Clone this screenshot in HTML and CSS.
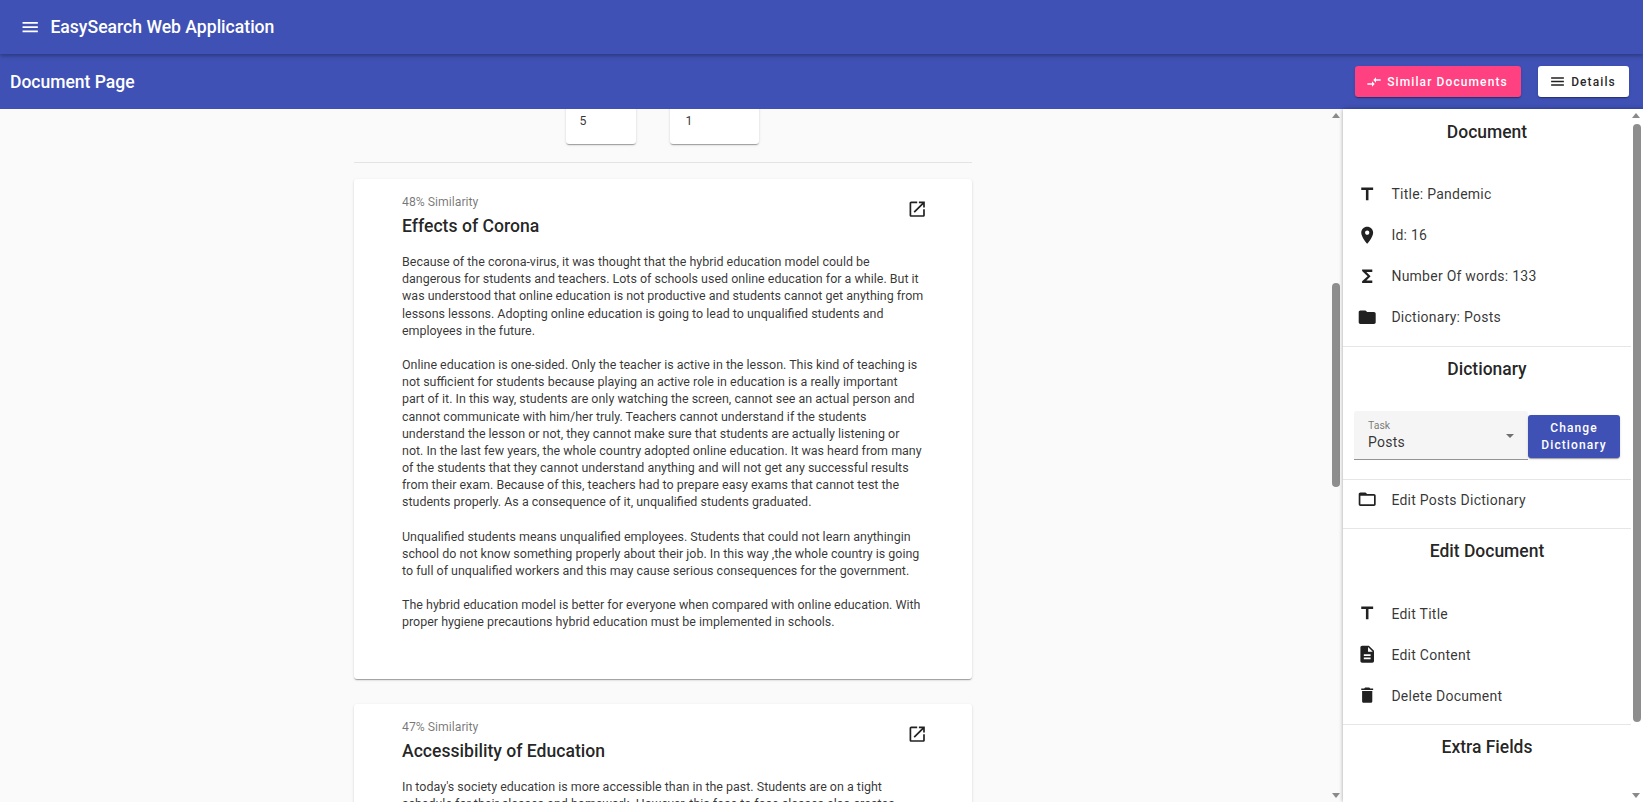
FILE: index.html
```html
<!DOCTYPE html>
<html lang="en">
<head>
    <meta charset="UTF-8">
    <title>EasySearch Web Application</title>
    <link rel="stylesheet" href="styles.css">
</head>
<body>

<header class="toolbar toolbar-top">
    <svg class="icon menu-icon" viewBox="0 0 24 24"><path d="M3 18h18v-2H3v2zm0-5h18v-2H3v2zm0-7v2h18V6H3z"/></svg>
    <span class="app-title">EasySearch Web Application</span>
</header>

<div class="toolbar toolbar-page">
    <span class="page-title">Document Page</span>
    <div class="toolbar-actions">
        <button class="btn btn-pink">
            <svg class="icon" viewBox="0 0 24 24"><path d="M9.01 14H2v2h7.01v3L13 15l-3.99-4v3zm5.98-1v-3H22V8h-7.01V5L11 9l3.99 4z"/></svg>
            Similar Documents
        </button>
        <button class="btn btn-white">
            <svg class="icon" viewBox="0 0 24 24"><path d="M3 18h18v-2H3v2zm0-5h18v-2H3v2zm0-7v2h18V6H3z"/></svg>
            Details
        </button>
    </div>
</div>

<div class="content">
    <main class="main">
        <div class="main-inner">
            <div class="stats">
                <div class="stat stat-small">5</div>
                <div class="stat stat-large">1</div>
            </div>
            <hr class="main-rule">

            <article class="card">
                <svg class="icon card-open" viewBox="0 0 24 24"><path d="M19 19H5V5h7V3H5c-1.11 0-2 .9-2 2v14c0 1.1.89 2 2 2h14c1.1 0 2-.9 2-2v-7h-2v7zM14 3v2h3.59l-9.83 9.83 1.41 1.41L19 6.41V10h2V3h-7z"/></svg>
                <div class="card-sub">48% Similarity</div>
                <h2 class="card-title">Effects of Corona</h2>
                <p>Because of the corona-virus, it was thought that the hybrid education model could be<br>
                dangerous for students and teachers. Lots of schools used online education for a while. But it<br>
                was understood that online education is not productive and students cannot get anything from<br>
                lessons lessons. Adopting online education is going to lead to unqualified students and<br>
                employees in the future.</p>
                <p>Online education is one-sided. Only the teacher is active in the lesson. This kind of teaching is<br>
                not sufficient for students because playing an active role in education is a really important<br>
                part of it. In this way, students are only watching the screen, cannot see an actual person and<br>
                cannot communicate with him/her truly. Teachers cannot understand if the students<br>
                understand the lesson or not, they cannot make sure that students are actually listening or<br>
                not. In the last few years, the whole country adopted online education. It was heard from many<br>
                of the students that they cannot understand anything and will not get any successful results<br>
                from their exam. Because of this, teachers had to prepare easy exams that cannot test the<br>
                students properly. As a consequence of it, unqualified students graduated.</p>
                <p>Unqualified students means unqualified employees. Students that could not learn anythingin<br>
                school do not know something properly about their job. In this way ,the whole country is going<br>
                to full of unqualified workers and this may cause serious consequences for the government.</p>
                <p>The hybrid education model is better for everyone when compared with online education. With<br>
                proper hygiene precautions hybrid education must be implemented in schools.</p>
            </article>

            <article class="card">
                <svg class="icon card-open" viewBox="0 0 24 24"><path d="M19 19H5V5h7V3H5c-1.11 0-2 .9-2 2v14c0 1.1.89 2 2 2h14c1.1 0 2-.9 2-2v-7h-2v7zM14 3v2h3.59l-9.83 9.83 1.41 1.41L19 6.41V10h2V3h-7z"/></svg>
                <div class="card-sub">47% Similarity</div>
                <h2 class="card-title">Accessibility of Education</h2>
                <p>In today's society education is more accessible than in the past. Students are on a tight<br>
                schedule for their classes and homework. However, this face to face classes also creates</p>
            </article>
        </div>

        <div class="scroll-up"></div>
        <div class="scroll-thumb main-thumb"></div>
        <div class="scroll-down"></div>
    </main>

    <aside class="side">
        <div class="side-inner">
            <section class="side-section first">
                <h3 class="side-heading">Document</h3>
                <div class="side-row">
                    <svg class="icon" viewBox="0 0 24 24"><path d="M5 4v3h5.5v12h3V7H19V4z"/></svg>
                    <span>Title: Pandemic</span>
                </div>
                <div class="side-row">
                    <svg class="icon" viewBox="0 0 24 24"><path d="M12 2C8.13 2 5 5.13 5 9c0 5.25 7 13 7 13s7-7.75 7-13c0-3.87-3.13-7-7-7zm0 9.5c-1.38 0-2.5-1.12-2.5-2.5s1.12-2.5 2.5-2.5 2.5 1.12 2.5 2.5-1.12 2.5-2.5 2.5z"/></svg>
                    <span>Id: 16</span>
                </div>
                <div class="side-row">
                    <svg class="icon" viewBox="0 0 24 24"><path d="M18 4H6v2l6.5 6L6 18v2h12v-3h-7l5-5-5-5h7z"/></svg>
                    <span>Number Of words: 133</span>
                </div>
                <div class="side-row">
                    <svg class="icon" viewBox="0 0 24 24"><path d="M10 4H4c-1.1 0-1.99.9-1.99 2L2 18c0 1.1.9 2 2 2h16c1.1 0 2-.9 2-2V8c0-1.1-.9-2-2-2h-8l-2-2z"/></svg>
                    <span>Dictionary: Posts</span>
                </div>
            </section>

            <section class="side-section dict-section">
                <h3 class="side-heading">Dictionary</h3>
                <div class="dict-form">
                    <div class="select-field">
                        <div class="select-text">
                            <div class="select-label">Task</div>
                            <div class="select-value">Posts</div>
                        </div>
                        <div class="select-arrow"></div>
                    </div>
                    <button class="btn btn-blue">Change Dictionary</button>
                </div>
            </section>

            <section class="side-section edit-link">
                <div class="side-row">
                    <svg class="icon" viewBox="0 0 24 24"><path d="M20 6h-8l-2-2H4c-1.1 0-1.99.9-1.99 2L2 18c0 1.1.9 2 2 2h16c1.1 0 2-.9 2-2V8c0-1.1-.9-2-2-2zm0 12H4V8h16v10z"/></svg>
                    <span>Edit Posts Dictionary</span>
                </div>
            </section>

            <section class="side-section edit-section">
                <h3 class="side-heading">Edit Document</h3>
                <div class="side-row">
                    <svg class="icon" viewBox="0 0 24 24"><path d="M5 4v3h5.5v12h3V7H19V4z"/></svg>
                    <span>Edit Title</span>
                </div>
                <div class="side-row">
                    <svg class="icon" viewBox="0 0 24 24"><path d="M14 2H6c-1.1 0-1.99.9-1.99 2L4 20c0 1.1.89 2 1.99 2H18c1.1 0 2-.9 2-2V8l-6-6zm2 16H8v-2h8v2zm0-4H8v-2h8v2zm-3-5V3.5L18.5 9H13z"/></svg>
                    <span>Edit Content</span>
                </div>
                <div class="side-row">
                    <svg class="icon" viewBox="0 0 24 24"><path d="M6 19c0 1.1.9 2 2 2h8c1.1 0 2-.9 2-2V7H6v12zM19 4h-3.5l-1-1h-5l-1 1H5v2h14V4z"/></svg>
                    <span>Delete Document</span>
                </div>
            </section>

            <section class="side-section last">
                <h3 class="side-heading">Extra Fields</h3>
            </section>
        </div>

        <div class="scroll-up"></div>
        <div class="scroll-thumb side-thumb"></div>
        <div class="scroll-down"></div>
    </aside>
</div>

</body>
</html>
```

FILE: styles.css
```css
* {
    box-sizing: border-box;
}
body {
    margin: 0;
    height: 100vh;
    display: flex;
    flex-direction: column;
    overflow: hidden;
    background: #fafafa;
    font-family: Roboto, sans-serif;
    color: rgba(0, 0, 0, 0.87);
}
.icon {
    width: 20.4px;
    height: 20.4px;
    fill: currentColor;
    flex: none;
}

/* toolbars */
.toolbar {
    display: flex;
    align-items: center;
    flex: none;
    background: #3f51b5;
    color: white;
    font-weight: 500;
}
.toolbar-top {
    position: relative;
    z-index: 2;
    height: 54px;
    padding-left: 20px;
    gap: 10px;
    box-shadow: 0 2px 4px rgba(0, 0, 0, 0.3);
}
.app-title {
    font-size: 17.6px;
}
.toolbar-page {
    height: 55px;
    padding: 0 14px 0 10px;
    justify-content: space-between;
}
.page-title {
    font-size: 17.5px;
}
.toolbar-actions {
    display: flex;
    gap: 17px;
}

/* buttons */
.btn {
    display: flex;
    align-items: center;
    justify-content: center;
    height: 31px;
    border: none;
    border-radius: 3px;
    font-family: Roboto, sans-serif;
    font-size: 12px;
    font-weight: 500;
    letter-spacing: 1.1px;
    box-shadow: 0 2px 1px -1px rgba(0, 0, 0, 0.2), 0 1px 1px rgba(0, 0, 0, 0.14), 0 1px 3px rgba(0, 0, 0, 0.12);
}
.btn-pink {
    width: 166px;
    gap: 5px;
    padding: 0 2px 0 0;
    background: #ff4081;
    color: white;
}
.btn-pink .icon {
    width: 16px;
    height: 16px;
}
.btn-white {
    width: 91px;
    gap: 5px;
    padding: 0 2px 0 0;
    background: white;
    color: rgba(0, 0, 0, 0.87);
}
.btn-white .icon {
    width: 17px;
    height: 17px;
}
.btn-blue {
    width: 92px;
    height: 43px;
    margin-top: 4px;
    padding: 0 8px;
    line-height: 17px;
    background: #3f51b5;
    color: white;
    text-align: center;
}

/* main column */
.content {
    flex: 1;
    display: flex;
    min-height: 0;
}
.main {
    position: relative;
    flex: 1;
    min-width: 0;
    overflow: hidden;
    padding-right: 17px;
}
.main-inner {
    width: 618px;
    margin: 0 auto;
}
.stats {
    display: flex;
    justify-content: center;
    gap: 34px;
    margin-top: -45px;
    padding-right: 2px;
}
.stat {
    height: 80px;
    padding: 49px 0 0 14px;
    background: white;
    border-radius: 3px;
    font-size: 12.25px;
    line-height: 17px;
    color: rgba(0, 0, 0, 0.8);
    box-shadow: 0 2px 1px -1px rgba(0, 0, 0, 0.2), 0 1px 1px rgba(0, 0, 0, 0.14), 0 1px 3px rgba(0, 0, 0, 0.12);
}
.stat-small {
    width: 70px;
}
.stat-large {
    width: 89px;
    padding-left: 16px;
}
.main-rule {
    height: 1px;
    margin: 18px 0 16px;
    border: none;
    background: #e4e4e4;
}
.card {
    position: relative;
    height: 500px;
    margin-bottom: 25px;
    padding: 15px 46px 0 48px;
    background: white;
    border-radius: 3px;
    font-size: 12.48px;
    line-height: 17.15px;
    box-shadow: 0 2px 1px -1px rgba(0, 0, 0, 0.2), 0 1px 1px rgba(0, 0, 0, 0.14), 0 1px 3px rgba(0, 0, 0, 0.12);
}
.card-open {
    position: absolute;
    top: 20px;
    right: 45px;
}
.card-sub {
    font-size: 12.25px;
    color: rgba(0, 0, 0, 0.54);
}
.card-title {
    margin: 5px 0 17px;
    font-size: 17.6px;
    font-weight: 500;
    line-height: 20px;
}
.card p {
    margin: 0 0 17.15px;
    white-space: nowrap;
    color: rgba(0, 0, 0, 0.8);
}

/* right panel */
.side {
    position: relative;
    flex: none;
    width: 300px;
    background: white;
    box-shadow: 0 0 4px rgba(0, 0, 0, 0.35);
    overflow: hidden;
}
.side-inner {
    width: 288px;
}
.side-section {
    padding: 12px 0 9px;
    border-bottom: 1px solid #e6e6e6;
}
.side-section.first {
    padding: 13px 0 8.5px;
}
.side-section.first .side-heading {
    margin-bottom: 31.5px;
}
.side-section.last {
    border-bottom: none;
}
.side-heading {
    margin: 0 0 32px;
    font-size: 17.5px;
    font-weight: 500;
    line-height: 20px;
    text-align: center;
}
.side-row {
    display: flex;
    align-items: center;
    height: 41px;
    padding-left: 14px;
    gap: 14px;
    font-size: 14px;
    letter-spacing: 0.25px;
    color: rgba(0, 0, 0, 0.8);
}
.side-row .icon {
    color: rgba(0, 0, 0, 0.87);
}
.dict-section {
    padding-bottom: 19px;
}
.edit-link {
    padding: 0 0 8px;
}
.edit-link .side-row {
    margin-top: -1px;
}
.edit-section {
    padding-bottom: 8px;
}
.dict-form {
    display: flex;
    align-items: flex-start;
    padding-left: 11px;
}
.select-field {
    display: flex;
    align-items: center;
    justify-content: space-between;
    width: 174px;
    height: 49px;
    padding: 0 14px;
    background: #f5f5f5;
    border-radius: 3px 3px 0 0;
    border-bottom: 1px solid #949494;
}
.select-label {
    font-size: 10.5px;
    line-height: 13px;
    color: rgba(0, 0, 0, 0.54);
}
.select-value {
    font-size: 14px;
    line-height: 20px;
    letter-spacing: 0.25px;
    color: rgba(0, 0, 0, 0.8);
}
.select-arrow {
    width: 0;
    height: 0;
    margin-top: 2px;
    border-left: 4.5px solid transparent;
    border-right: 4.5px solid transparent;
    border-top: 4.5px solid rgba(0, 0, 0, 0.54);
}

/* scrollbars drawn over the panels */
.scroll-thumb {
    position: absolute;
    width: 8px;
    background: #8e8e8e;
    border-radius: 4px;
}
.main-thumb {
    top: 174px;
    right: 3px;
    height: 204px;
}
.side-thumb {
    top: 15px;
    right: 2px;
    height: 598px;
}
.scroll-up,
.scroll-down {
    position: absolute;
    right: 3px;
    width: 0;
    height: 0;
    border-left: 4px solid transparent;
    border-right: 4px solid transparent;
}
.scroll-up {
    top: 4px;
    border-bottom: 5px solid #8a8a8a;
}
.scroll-down {
    bottom: 4px;
    border-top: 5px solid #8a8a8a;
}
```
